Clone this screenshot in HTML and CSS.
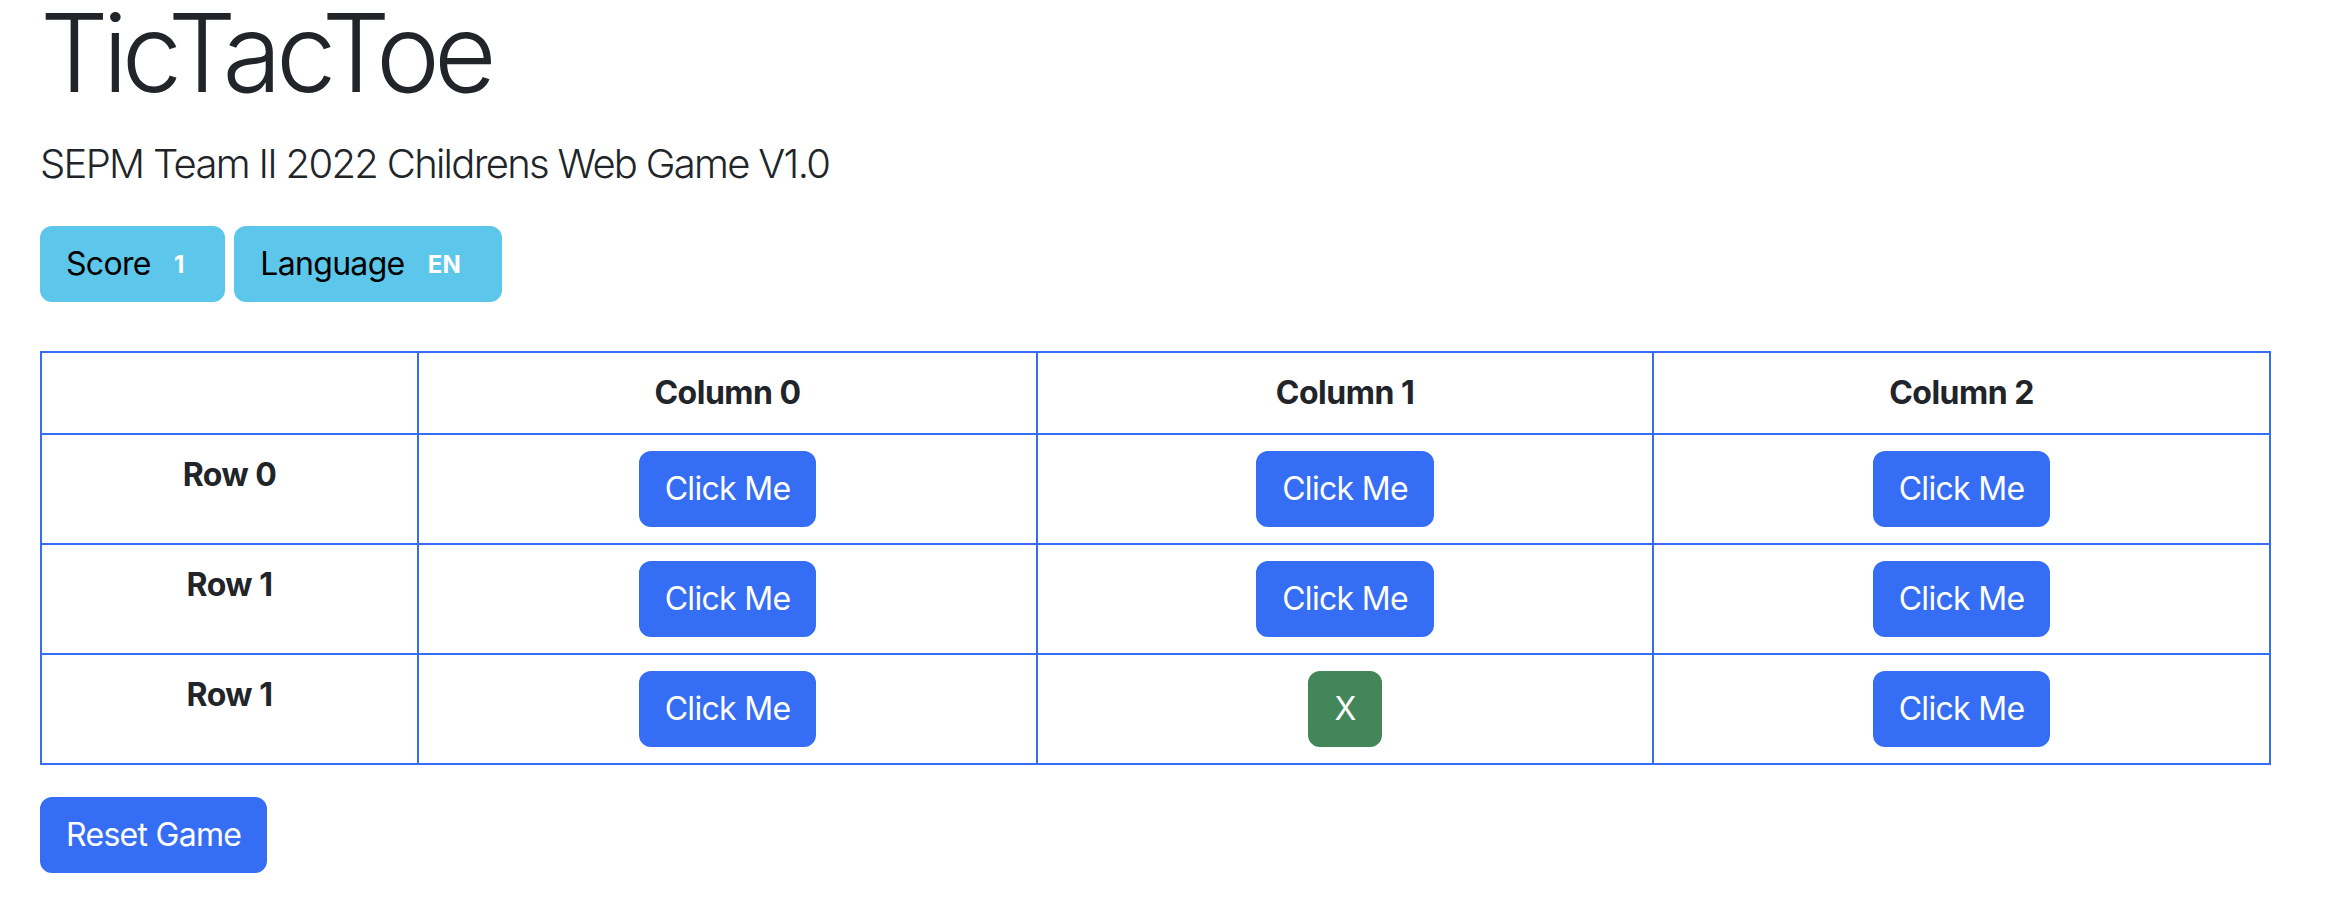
FILE: index.html
```html
<!DOCTYPE html>
<html lang="en">
<head>
<meta charset="utf-8">
<title>TicTacToe</title>
<link rel="stylesheet" href="styles.css">
</head>
<body>
<main class="page">
  <h1 class="title">TicTacToe</h1>
  <p class="lead">SEPM Team II 2022 Childrens Web Game V1.0</p>
  <div class="status">
    <button class="btn btn-info">Score <span class="badge">1</span></button>
    <button class="btn btn-info">Language <span class="badge">EN</span></button>
  </div>
  <table class="board">
    <colgroup>
      <col class="c-head">
      <col class="c-0">
      <col class="c-1">
      <col class="c-2">
    </colgroup>
    <thead>
      <tr>
        <th></th>
        <th>Column 0</th>
        <th>Column 1</th>
        <th>Column 2</th>
      </tr>
    </thead>
    <tbody>
      <tr>
        <th>Row 0</th>
        <td><button class="btn btn-primary">Click Me</button></td>
        <td><button class="btn btn-primary">Click Me</button></td>
        <td><button class="btn btn-primary">Click Me</button></td>
      </tr>
      <tr>
        <th>Row 1</th>
        <td><button class="btn btn-primary">Click Me</button></td>
        <td><button class="btn btn-primary">Click Me</button></td>
        <td><button class="btn btn-primary">Click Me</button></td>
      </tr>
      <tr>
        <th>Row 1</th>
        <td><button class="btn btn-primary">Click Me</button></td>
        <td><button class="btn btn-success">X</button></td>
        <td><button class="btn btn-primary">Click Me</button></td>
      </tr>
    </tbody>
  </table>
  <button class="btn btn-primary">Reset Game</button>
</main>
</body>
</html>
```

FILE: styles.css
```css
html, body {
  margin: 0;
  padding: 0;
  background: #ffffff;
}

body {
  font-family: Inter, "Liberation Sans", sans-serif;
  font-size: 32px;
  line-height: 1.5;
  color: #212529;
}

.page {
  padding: 0 0 0 40px;
}

.title {
  margin: 0 0 28px 0;
  font-size: 108px;
  font-weight: 300;
  line-height: 106px;
  letter-spacing: -6px;
}

.lead {
  margin: 0 0 32px 0;
  font-size: 40px;
  font-weight: 300;
  line-height: 60px;
  letter-spacing: -1.7px;
}

.status {
  display: flex;
  gap: 9px;
  margin-bottom: 49px;
}

.btn {
  display: inline-block;
  font-family: inherit;
  font-size: 32px;
  font-weight: 400;
  line-height: 48px;
  padding: 12px 24px;
  border: 2px solid transparent;
  border-radius: 12px;
  cursor: pointer;
  letter-spacing: -0.7px;
}

.btn-primary {
  background: #356ef4;
  border-color: #356ef4;
  color: #ffffff;
}

.btn-info {
  background: #5cc7eb;
  border-color: #5cc7eb;
  color: #000000;
}

.btn-success {
  background: #43865a;
  border-color: #43865a;
  color: #ffffff;
}

.badge {
  display: inline-block;
  position: relative;
  top: -2px;
  padding: 8px 15px;
  font-size: 24px;
  font-weight: 700;
  line-height: 1;
  color: #ffffff;
  letter-spacing: 0;
}

.board {
  width: 2229px;
  table-layout: fixed;
  border-collapse: collapse;
  border: 2px solid #356ef4;
  margin-bottom: 32px;
}

.c-head { width: 377px; }
.c-0 { width: 619px; }
.c-1 { width: 616px; }
.c-2 { width: 617px; }

.board th,
.board td {
  border: 2px solid #356ef4;
  padding: 16px;
  text-align: center;
  vertical-align: top;
}

.board th {
  font-weight: 700;
  letter-spacing: -0.5px;
}
```
